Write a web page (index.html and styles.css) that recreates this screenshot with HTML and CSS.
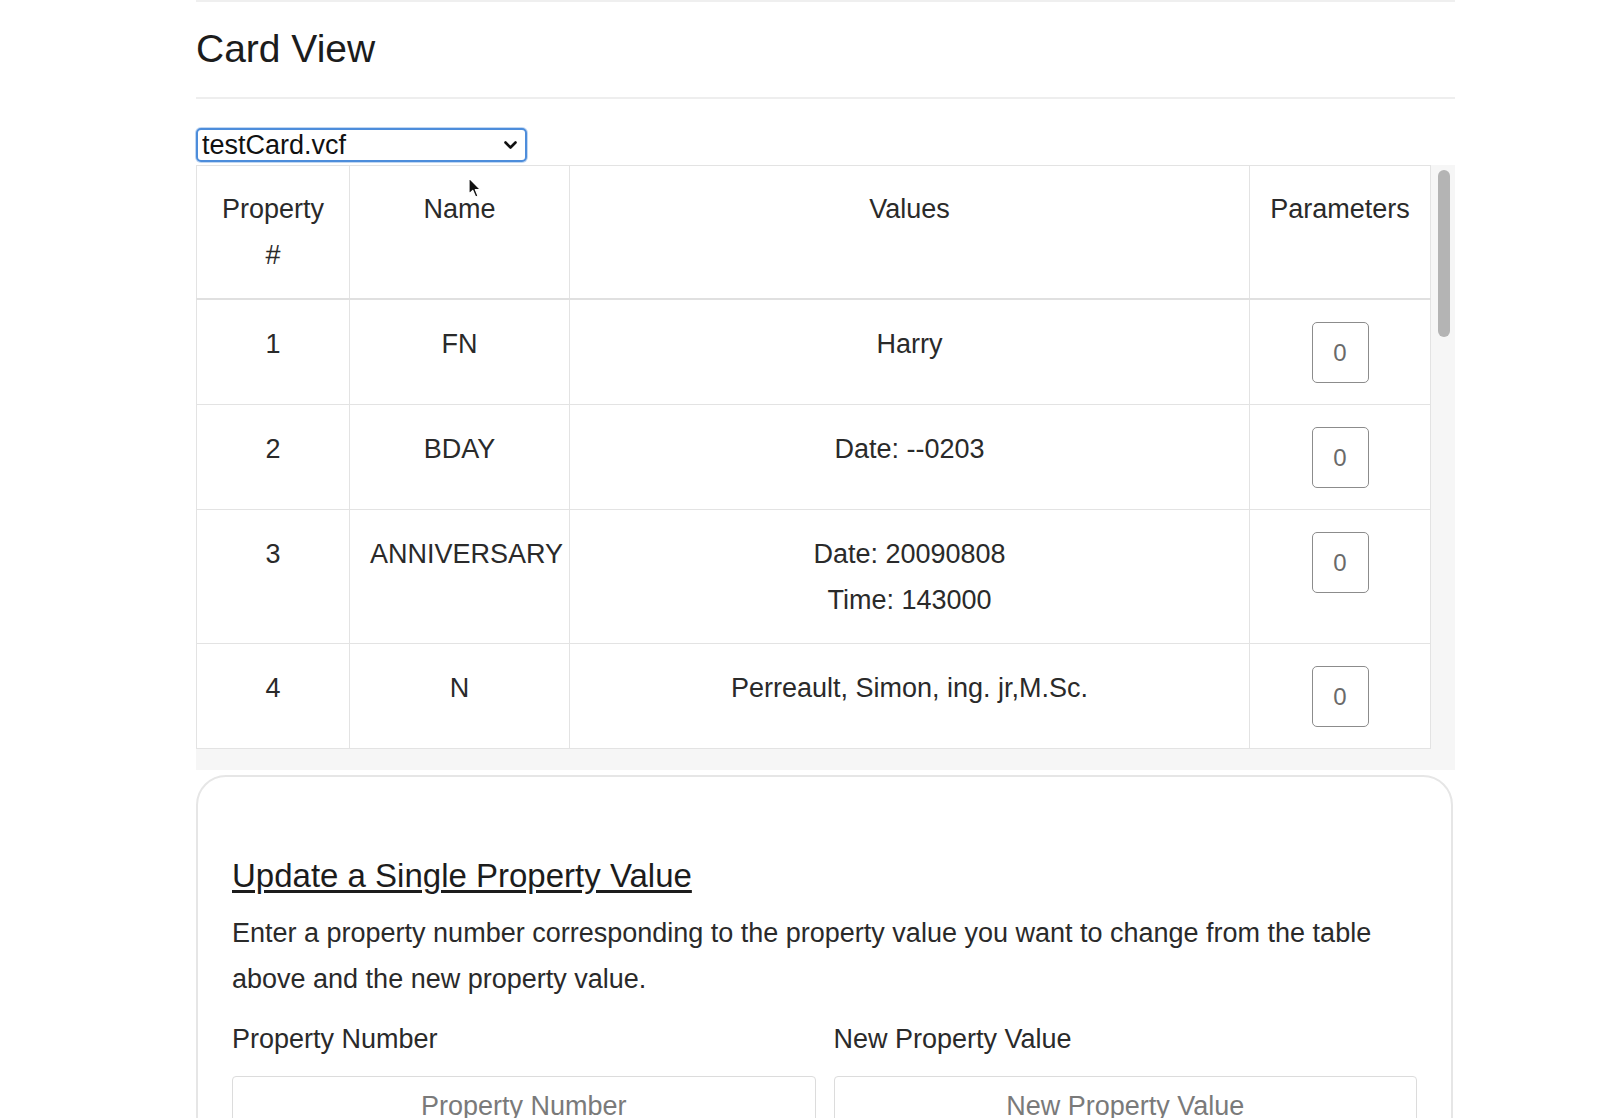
FILE: index.html
```html
<!DOCTYPE html>
<html lang="en">
<head>
<meta charset="utf-8">
<title>Card View</title>
<link rel="stylesheet" href="styles.css">
</head>
<body>
<div class="page">
  <div class="prev-edge"></div>
  <h2 class="title">Card View</h2>
  <hr class="rule">
  <div class="select-wrap">
    <select class="file-select"><option>testCard.vcf</option></select>
    <svg class="chev" width="13" height="9" viewBox="0 0 13 9"><path d="M1.5 1.5 L6.5 6.5 L11.5 1.5" fill="none" stroke="#111" stroke-width="2.6" stroke-linecap="round" stroke-linejoin="round"/></svg>
  </div>
  <div class="scroller">
    <div class="scroller-main">
      <table class="props">
        <colgroup>
          <col class="c1"><col class="c2"><col class="c3"><col class="c4">
        </colgroup>
        <thead>
          <tr><th>Property #</th><th>Name</th><th>Values</th><th>Parameters</th></tr>
        </thead>
        <tbody>
          <tr><td>1</td><td>FN</td><td>Harry</td><td><button class="param-btn">0</button></td></tr>
          <tr><td>2</td><td>BDAY</td><td>Date: --0203</td><td><button class="param-btn">0</button></td></tr>
          <tr><td>3</td><td>ANNIVERSARY</td><td>Date: 20090808<br>Time: 143000</td><td><button class="param-btn">0</button></td></tr>
          <tr><td>4</td><td>N</td><td>Perreault, Simon, ing. jr,M.Sc.</td><td><button class="param-btn">0</button></td></tr>
        </tbody>
      </table>
      <div class="hbar"></div>
    </div>
    <div class="vbar"><div class="thumb"></div></div>
  </div>
  <section class="update-card">
    <h3 class="update-title">Update a Single Property Value</h3>
    <p class="update-desc">Enter a property number corresponding to the property value you want to change from the table above and the new property value.</p>
    <div class="fields">
      <div class="field">
        <label class="field-label">Property Number</label>
        <input class="field-input" placeholder="Property Number">
      </div>
      <div class="field">
        <label class="field-label">New Property Value</label>
        <input class="field-input" placeholder="New Property Value">
      </div>
    </div>
  </section>
  <svg class="cursor" width="14" height="22" viewBox="0 0 14 22"><path d="M1 1 L1 17 L4.8 13.4 L7.6 20 L10 19 L7.3 12.6 L12.4 12.6 Z" fill="#111" stroke="#fff" stroke-width="1.2" stroke-linejoin="round"/></svg>
</div>
</body>
</html>
```

FILE: styles.css
```css
html, body {
  margin: 0;
  padding: 0;
  background: #ffffff;
}

body {
  font-family: "Liberation Sans", Arial, Helvetica, sans-serif;
  color: #262626;
}

.page {
  width: 1259px;
  margin-left: 196px;
  position: relative;
}

.prev-edge {
  height: 0;
  border-top: 2px solid #efefef;
}

.title {
  font-size: 39px;
  font-weight: 400;
  line-height: 46px;
  margin: 24px 0 0;
  color: #1c1c1c;
}

.rule {
  margin: 25px 0 0;
  border: 0;
  border-top: 2px solid #eeeeee;
  height: 0;
}

.select-wrap {
  margin-top: 29px;
  width: 331px;
  height: 34px;
  position: relative;
}

.file-select {
  width: 100%;
  height: 34px;
  box-sizing: border-box;
  border: 2px solid #4d8ddb;
  border-radius: 5px;
  box-shadow: 0 0 0 1px rgba(77, 141, 219, 0.35);
  background: #ffffff;
  color: #111111;
  font-family: "Liberation Sans", Arial, sans-serif;
  font-size: 27px;
  line-height: 30px;
  padding: 0 30px 0 4px;
  -webkit-appearance: none;
  appearance: none;
  outline: none;
}

.chev {
  position: absolute;
  right: 10px;
  top: 13px;
  pointer-events: none;
}

.scroller {
  margin-top: 3px;
  display: flex;
  height: 605px;
  background: #f6f6f6;
}

.scroller-main {
  width: 1234px;
  display: flex;
  flex-direction: column;
}

.props {
  width: 1234px;
  table-layout: fixed;
  border-collapse: collapse;
  background: #ffffff;
}

.c1 { width: 153px; }
.c2 { width: 220px; }
.c3 { width: 680px; }
.c4 { width: 181px; }

.props th,
.props td {
  border: 1px solid #e3e3e3;
  padding: 21px 20px 20px;
  text-align: center;
  vertical-align: top;
  font-size: 27px;
  line-height: 46px;
  font-weight: 400;
  color: #2a2a2a;
}

.props thead th {
  padding-top: 20px;
  padding-bottom: 20px;
  border-bottom: 2px solid #e0e0e0;
}

.param-btn {
  display: block;
  margin: 1px auto 1px;
  width: 57px;
  height: 61px;
  box-sizing: border-box;
  border: 1.5px solid #8c8c8c;
  border-radius: 5px;
  background: #ffffff;
  font-family: "Liberation Sans", Arial, sans-serif;
  font-size: 24px;
  color: #6a6a6a;
  padding: 0;
}

.hbar {
  flex: 1;
}

.vbar {
  flex: 1;
  padding: 5px 0 0 8px;
}

.thumb {
  width: 12px;
  height: 167px;
  border-radius: 6px;
  background: #b4b4b4;
}

.update-card {
  margin-top: 5px;
  width: 1257px;
  box-sizing: border-box;
  border: 2px solid #e6e6e6;
  border-radius: 30px;
  padding: 79px 34px 40px;
}

.update-title {
  margin: 0 0 14px;
  font-size: 33px;
  line-height: 40px;
  font-weight: 400;
  text-decoration: underline;
  text-underline-offset: 3px;
  color: #1c1c1c;
}

.update-desc {
  margin: 0 0 14px;
  font-size: 27px;
  line-height: 46px;
  color: #2a2a2a;
}

.fields {
  display: grid;
  grid-template-columns: 1fr 1fr;
  gap: 18px;
}

.field-label {
  display: block;
  font-size: 27px;
  line-height: 46px;
  margin-bottom: 14px;
  color: #2a2a2a;
}

.field-input {
  display: block;
  width: 100%;
  height: 60px;
  box-sizing: border-box;
  border: 1px solid #dcdcdc;
  border-radius: 4px;
  text-align: center;
  font-family: "Liberation Sans", Arial, sans-serif;
  font-size: 27px;
  color: #333333;
  background: #ffffff;
}

.field-input::placeholder {
  color: #7a7a7a;
}

.cursor {
  position: absolute;
  left: 272px;
  top: 177px;
}
```
